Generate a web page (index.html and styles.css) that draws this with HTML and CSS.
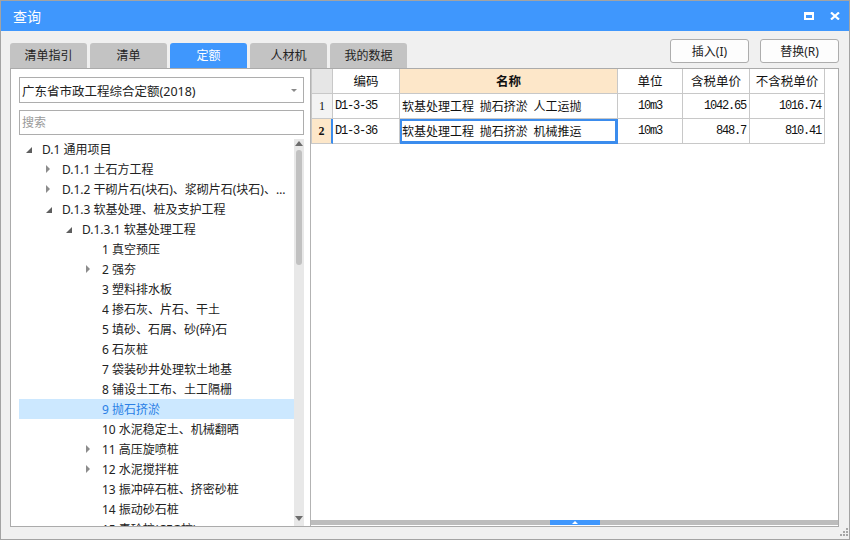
FILE: index.html
```html
<!DOCTYPE html>
<html lang="zh-CN">
<head>
<meta charset="utf-8">
<title>查询</title>
<link rel="stylesheet" href="styles.css">
</head>
<body>
<div class="window">
  <header class="titlebar">
    <span class="title">查询</span>
    <div class="win-ctrls">
      <svg class="ic" width="10" height="8" viewBox="0 0 10 8"><path d="M0 0H10V8H0Z M2 3V6H8V3Z" fill="#fff" fill-rule="evenodd"/></svg>
      <svg class="ic" width="10" height="8" viewBox="0 0 10 8"><path d="M1 0.5L9 7.5M9 0.5L1 7.5" stroke="#fff" stroke-width="2.2"/></svg>
    </div>
  </header>
  <div class="content">
    <div class="toolbar">
      <div class="tabs">
        <div class="tab">清单指引</div>
        <div class="tab">清单</div>
        <div class="tab active">定额</div>
        <div class="tab">人材机</div>
        <div class="tab">我的数据</div>
      </div>
      <div class="actions">
        <button class="btn">插入(I)</button>
        <button class="btn">替换(R)</button>
      </div>
    </div>
    <div class="main">
      <div class="left">
        <div class="select"><span>广东省市政工程综合定额(2018)</span><i class="caret"></i></div>
        <div class="search">搜索</div>
        <div class="tree-wrap">
          <ul class="tree">
            <li class="row l0"><span class="exp open"></span><span class="label">D.1 通用项目</span></li>
            <li class="row l1"><span class="exp closed"></span><span class="label">D.1.1 土石方工程</span></li>
            <li class="row l1"><span class="exp closed"></span><span class="label">D.1.2 干砌片石(块石)、浆砌片石(块石)、混凝土垫层</span></li>
            <li class="row l1"><span class="exp open"></span><span class="label">D.1.3 软基处理、桩及支护工程</span></li>
            <li class="row l2"><span class="exp open"></span><span class="label">D.1.3.1 软基处理工程</span></li>
            <li class="row l3"><span class="exp"></span><span class="label">1 真空预压</span></li>
            <li class="row l3"><span class="exp closed"></span><span class="label">2 强夯</span></li>
            <li class="row l3"><span class="exp"></span><span class="label">3 塑料排水板</span></li>
            <li class="row l3"><span class="exp"></span><span class="label">4 掺石灰、片石、干土</span></li>
            <li class="row l3"><span class="exp"></span><span class="label">5 填砂、石屑、砂(碎)石</span></li>
            <li class="row l3"><span class="exp"></span><span class="label">6 石灰桩</span></li>
            <li class="row l3"><span class="exp"></span><span class="label">7 袋装砂井处理软土地基</span></li>
            <li class="row l3"><span class="exp"></span><span class="label">8 铺设土工布、土工隔栅</span></li>
            <li class="row l3 selected"><span class="exp"></span><span class="label">9 抛石挤淤</span></li>
            <li class="row l3"><span class="exp"></span><span class="label">10 水泥稳定土、机械翻晒</span></li>
            <li class="row l3"><span class="exp closed"></span><span class="label">11 高压旋喷桩</span></li>
            <li class="row l3"><span class="exp closed"></span><span class="label">12 水泥搅拌桩</span></li>
            <li class="row l3"><span class="exp"></span><span class="label">13 振冲碎石桩、挤密砂桩</span></li>
            <li class="row l3"><span class="exp"></span><span class="label">14 振动砂石桩</span></li>
            <li class="row l3"><span class="exp"></span><span class="label">15 素砼桩(CFG桩)</span></li>
          </ul>
          <div class="vscroll">
            <i class="arr up"></i>
            <div class="track"><div class="thumb"></div></div>
            <i class="arr down"></i>
          </div>
        </div>
      </div>
      <div class="divider"></div>
      <div class="right">
        <div class="grid">
          <div class="cell hd num"></div>
          <div class="cell hd">编码</div>
          <div class="cell hd name-hd">名称</div>
          <div class="cell hd">单位</div>
          <div class="cell hd">含税单价</div>
          <div class="cell hd">不含税单价</div>

          <div class="cell num">1</div>
          <div class="cell mono code">D1-3-35</div>
          <div class="cell name">软基处理工程 抛石挤淤 人工运抛</div>
          <div class="cell mono center">10m3</div>
          <div class="cell mono price">1042.65</div>
          <div class="cell mono price">1016.74</div>

          <div class="cell num cur">2</div>
          <div class="cell mono code">D1-3-36</div>
          <div class="cell name sel">软基处理工程 抛石挤淤 机械推运</div>
          <div class="cell mono center">10m3</div>
          <div class="cell mono price">848.7</div>
          <div class="cell mono price">810.41</div>
        </div>
        <div class="spacer"></div>
        <div class="hbar"><div class="handle"><i class="handle-arrow"></i></div></div>
      </div>
    </div>
  </div>
  <svg class="grip" width="8" height="8" viewBox="0 0 8 8" fill="#a6a6a6">
    <rect x="6" y="0" width="2" height="2"/>
    <rect x="3" y="3" width="2" height="2"/><rect x="6" y="3" width="2" height="2"/>
    <rect x="0" y="6" width="2" height="2"/><rect x="3" y="6" width="2" height="2"/><rect x="6" y="6" width="2" height="2"/>
  </svg>
</div>
</body>
</html>
```

FILE: styles.css
```css
* { box-sizing: border-box; }
html, body { margin: 0; padding: 0; }
body {
  font-family: "Noto Sans", "Noto Sans CJK SC", sans-serif;
  font-size: 12px;
  color: #222;
  background: #f0f0f0;
}
.window {
  position: relative;
  width: 850px;
  height: 540px;
  border: 1px solid #a3a3a3;
  background: #f0f0f0;
  overflow: hidden;
}
.titlebar {
  height: 30px;
  background: #3f97fd;
  display: flex;
  align-items: center;
  justify-content: space-between;
  padding: 0 9px 0 12px;
  color: #fff;
}
.title { font-size: 14px; line-height: 30px; padding-top: 2px; }
.win-ctrls { display: flex; gap: 16px; align-items: center; }
.ic { display: block; }

.content { padding: 0 10px 0 9px; }
.toolbar {
  height: 37px;
  display: flex;
  justify-content: space-between;
}
.tabs { display: flex; gap: 3px; align-self: flex-end; }
.tab {
  width: 77px;
  height: 25px;
  line-height: 25px;
  text-align: center;
  background: #c3c3c3;
  border-radius: 3px 3px 0 0;
  color: #222;
}
.tab.active { background: #3f97fd; color: #fff; }
.actions { display: flex; gap: 11px; padding-top: 8px; }
.btn {
  width: 79px;
  height: 24px;
  background: #fdfdfd;
  border: 1px solid #adadad;
  border-radius: 3px;
  font-family: inherit;
  font-size: 12px;
  color: #222;
  padding: 0;
}

.main {
  height: 459px;
  border: 1px solid #ababab;
  display: flex;
  background: #fff;
}
.left {
  width: 299px;
  padding: 8px 0 0 8px;
  display: flex;
  flex-direction: column;
}
.select {
  width: 285px;
  height: 26px;
  border: 1px solid #adadad;
  display: flex;
  align-items: center;
  justify-content: space-between;
  padding: 0 6px 0 2px;
  font-size: 12.5px;
}
.caret {
  width: 0; height: 0;
  border-left: 3px solid transparent;
  border-right: 3px solid transparent;
  border-top: 3px solid #8a8a8a;
}
.search {
  width: 285px;
  height: 25px;
  margin-top: 7px;
  border: 1px solid #adadad;
  line-height: 23px;
  padding-left: 2px;
  color: #9a9a9a;
}
.tree-wrap {
  margin-top: 4px;
  flex: 1;
  display: flex;
  min-height: 0;
}
.tree {
  list-style: none;
  margin: 0;
  padding: 0;
  width: 275px;
  overflow: hidden;
}
.row {
  height: 20px;
  line-height: 20px;
  display: flex;
  align-items: center;
  white-space: nowrap;
  padding-right: 3px;
}
.row.l0 { padding-left: 3px; }
.row.l1 { padding-left: 23px; }
.row.l2 { padding-left: 43px; }
.row.l3 { padding-left: 63px; }
.row.selected { background: #cce8ff; color: #2a7fe6; }
.exp {
  flex: 0 0 20px;
  height: 20px;
  position: relative;
}
.exp.open::before {
  content: "";
  position: absolute;
  left: 4px; top: 8px;
  width: 0; height: 0;
  border-left: 6px solid transparent;
  border-bottom: 6px solid #5e5e5e;
}
.exp.closed::before {
  content: "";
  position: absolute;
  left: 4px; top: 6px;
  width: 0; height: 0;
  border-top: 4px solid transparent;
  border-bottom: 4px solid transparent;
  border-left: 4px solid #8c8c8c;
}
.label { overflow: hidden; text-overflow: ellipsis; padding-top: 2px; font-size: 12px; }

.vscroll {
  width: 10px;
  background: #e8e8e8;
  display: flex;
  flex-direction: column;
  align-items: center;
  padding: 2px 0 5px;
}
.arr { width: 0; height: 0; border-left: 4px solid transparent; border-right: 4px solid transparent; }
.arr.up { border-bottom: 5px solid #6d6d6d; }
.arr.down { border-top: 5px solid #6d6d6d; }
.track { flex: 1; width: 100%; padding: 4px 2px; }
.thumb { width: 6px; height: 115px; border-radius: 3px; background: #c1c1c1; }

.divider { width: 1px; background: #b3b3b3; }
.right {
  width: 527px;
  display: flex;
  flex-direction: column;
}
.grid {
  display: grid;
  grid-template-columns: 21px 67px 218px 65px 67px 75px;
  grid-auto-rows: 25px;
  width: 514px;
  border-left: 1px solid #c8c8c8;
}
.cell {
  border-right: 1px solid #c8c8c8;
  border-bottom: 1px solid #c8c8c8;
  line-height: 24px;
  white-space: nowrap;
  overflow: hidden;
  font-family: "Noto Sans CJK SC", sans-serif;
  font-size: 12px;
  color: #111;
}
.hd { text-align: center; background: #fff; font-size: 12.5px; }
.hd.num { background: #e6e6e6; }
.name-hd { background: #fde7c9; font-weight: bold; }
.num {
  background: #f3f3f3;
  text-align: center;
  font-family: "Liberation Serif", serif;
  font-size: 12px;
}
.num.cur { background: #fde7c9; font-weight: bold; border-right: 2px solid #3b8ced; }
.mono {
  font-family: "Liberation Mono", monospace;
  font-size: 12px;
  letter-spacing: -1.2px;
}
.code { padding-left: 2px; }
.center { text-align: center; }
.price { text-align: right; padding-right: 3px; }
.name { padding-left: 2px; font-size: 12px; word-spacing: 3px; }
.name.sel { box-shadow: inset 0 0 0 2px #3b8ced; border-color: #3b8ced; }
.spacer { flex: 1; }
.hbar {
  height: 5px;
  background: #bdbdbd;
  display: flex;
  justify-content: center;
  margin-bottom: 1px;
}
.handle {
  width: 50px;
  background: #3f97fd;
  display: flex;
  justify-content: center;
  align-items: center;
}
.handle-arrow {
  width: 0; height: 0;
  border-left: 3px solid transparent;
  border-right: 3px solid transparent;
  border-bottom: 3px solid #fff;
}
.grip { position: absolute; right: 1px; bottom: 3px; }
```
